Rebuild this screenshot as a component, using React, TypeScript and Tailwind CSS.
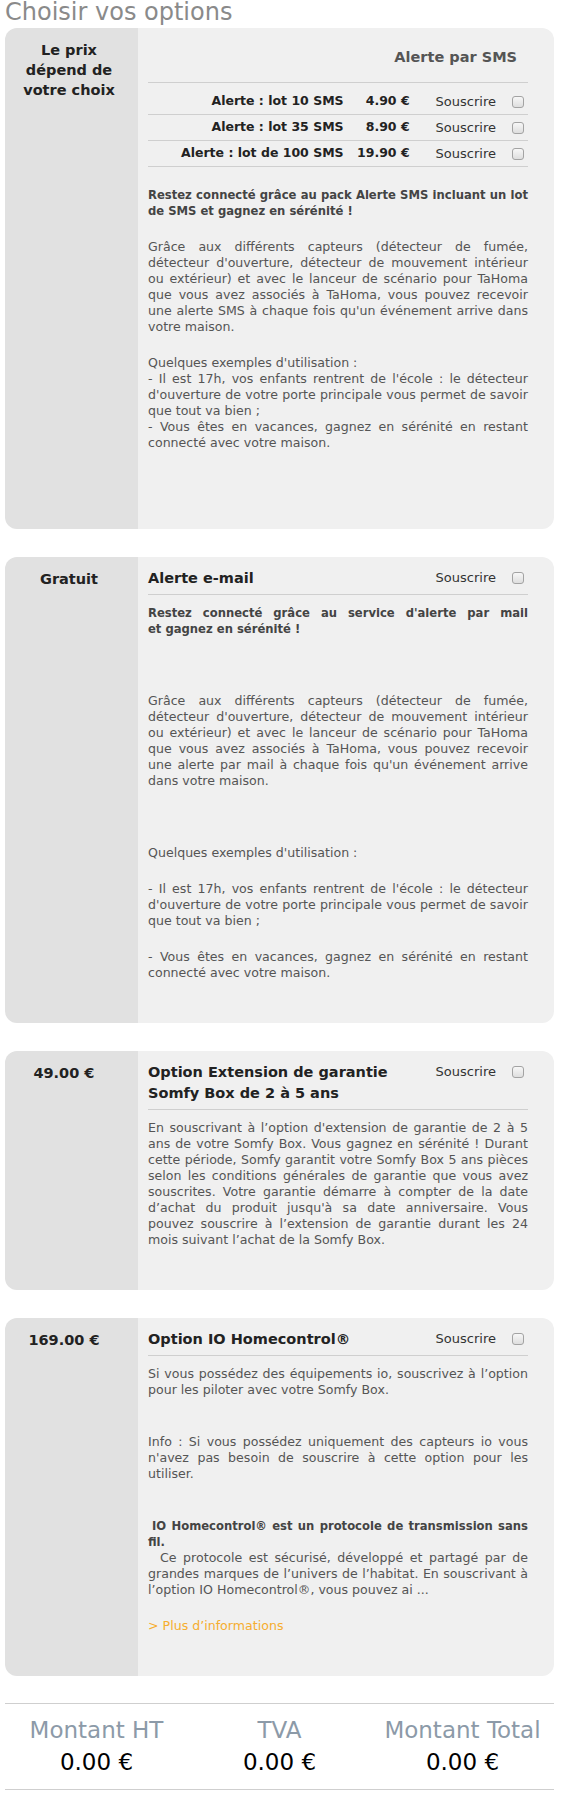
import type { ReactNode } from 'react';

function Box() {
  return (
    <span className="inline-block h-[12px] w-[12px] rounded-[3px] border border-[#a3a3a3] bg-linear-to-b from-[#f7f7f7] to-[#dedede]" />
  );
}

function Subscribe() {
  return (
    <div className="flex shrink-0 items-center gap-[16px] pr-[4px] text-[13px] font-normal leading-4 text-[#333]">
      <span>Souscrire</span>
      <Box />
    </div>
  );
}

function Card({ side, children }: { side: ReactNode; children: ReactNode }) {
  return (
    <section className="mt-[28px] flex overflow-hidden rounded-[12px] first-of-type:mt-0">
      <div className="w-[133px] shrink-0 bg-[#e1e1e1] pt-3 pl-3 pr-[17px] text-center text-[14.5px] font-bold leading-5 text-[#222]">
        {side}
      </div>
      <div className="flex-1 bg-[#f0f0f0] pt-[11px] pl-[10px] pr-[26px] pb-[42px]">{children}</div>
    </section>
  );
}

function Head({ children }: { children: ReactNode }) {
  return (
    <div className="flex items-start justify-between gap-2 border-b border-[#cfcfcf] pb-[5px]">
      <h3 className="text-[14.5px] font-bold leading-[21px] text-[#222]">{children}</h3>
      <div className="pt-[2px]">
        <Subscribe />
      </div>
    </div>
  );
}

const lots = [
  { label: 'Alerte : lot 10 SMS', price: '4.90 €' },
  { label: 'Alerte : lot 35 SMS', price: '8.90 €' },
  { label: 'Alerte : lot de 100 SMS', price: '19.90 €' },
];

const text = 'text-justify text-[12.6px] leading-4 text-[#555]';
const bold = 'text-justify text-[11.6px] font-bold leading-4 text-[#444]';

export default function App() {
  return (
    <main className="ml-[5px] w-[549px] bg-white pb-[6px] font-['DejaVu_Sans',sans-serif]">
      <h1 className="mb-[4px] text-[24px] leading-[24px] text-[#8a8a8a]">Choisir vos options</h1>

      <div>
        <Card side="Le prix dépend de votre choix">
          <div className="border-b border-[#cfcfcf] pt-[8px] pb-[15px] pr-[11px] text-right text-[14.5px] font-bold leading-5 text-[#555]">
            Alerte par SMS
          </div>
          <div className="mt-[6px]">
            {lots.map((lot) => (
              <div key={lot.label} className="flex h-[26px] items-center border-b border-[#cfcfcf] text-[12.5px] font-bold text-[#222]">
                <span className="flex-1 text-right">{lot.label}</span>
                <span className="w-[66px] text-right">{lot.price}</span>
                <div className="ml-[26px]">
                  <Subscribe />
                </div>
              </div>
            ))}
          </div>
          <p className={`mt-5 ${bold}`}>
            Restez connecté grâce au pack Alerte SMS incluant un lot de SMS et gagnez en sérénité !
          </p>
          <p className={`mt-5 ${text}`}>
            Grâce aux différents capteurs (détecteur de fumée, détecteur d'ouverture, détecteur de mouvement intérieur ou
            extérieur) et avec le lanceur de scénario pour TaHoma que vous avez associés à TaHoma, vous pouvez recevoir une
            alerte SMS à chaque fois qu'un événement arrive dans votre maison.
          </p>
          <p className={`mt-5 ${text}`}>
            Quelques exemples d'utilisation :
            <br />- Il est 17h, vos enfants rentrent de l'école : le détecteur d'ouverture de votre porte principale vous
            permet de savoir que tout va bien ;
            <br />- Vous êtes en vacances, gagnez en sérénité en restant connecté avec votre maison.
          </p>
          <p className={`mt-5 ${text}`}>&nbsp;</p>
        </Card>

        <Card side="Gratuit">
          <Head>Alerte e-mail</Head>
          <p className={`mt-[10px] ${bold}`}>
            <span className="block [text-align-last:justify]">Restez connecté grâce au service d'alerte par mail</span>
            et gagnez en sérénité !
          </p>
          <p className={`mt-5 ${text}`}>&nbsp;</p>
          <p className={`mt-5 ${text}`}>
            Grâce aux différents capteurs (détecteur de fumée, détecteur d'ouverture, détecteur de mouvement intérieur ou
            extérieur) et avec le lanceur de scénario pour TaHoma que vous avez associés à TaHoma, vous pouvez recevoir une
            alerte par mail à chaque fois qu'un événement arrive dans votre maison.
          </p>
          <p className={`mt-5 ${text}`}>&nbsp;</p>
          <p className={`mt-5 ${text}`}>Quelques exemples d'utilisation :</p>
          <p className={`mt-5 ${text}`}>
            - Il est 17h, vos enfants rentrent de l'école : le détecteur d'ouverture de votre porte principale vous permet
            de savoir que tout va bien ;
          </p>
          <p className={`mt-5 ${text}`}>- Vous êtes en vacances, gagnez en sérénité en restant connecté avec votre maison.</p>
        </Card>

        <Card side={'49.00 €\u00a0\u00a0'}>
          <Head>Option Extension de garantie Somfy Box de 2 à 5 ans</Head>
          <p className={`mt-[10px] ${text}`}>
            En souscrivant à l’option d'extension de garantie de 2 à 5 ans de votre Somfy Box. Vous gagnez en sérénité !
            Durant cette période, Somfy garantit votre Somfy Box 5 ans pièces selon les conditions générales de garantie
            que vous avez souscrites. Votre garantie démarre à compter de la date d’achat du produit jusqu'à sa date
            anniversaire. Vous pouvez souscrire à l’extension de garantie durant les 24 mois suivant l’achat de la Somfy
            Box.
          </p>
        </Card>

        <Card side={'169.00 €\u00a0\u00a0'}>
          <Head>Option IO Homecontrol®</Head>
          <p className={`mt-[10px] ${text}`}>
            Si vous possédez des équipements io, souscrivez à l’option pour les piloter avec votre Somfy Box.
          </p>
          <p className={`mt-9 ${text}`}>
            Info : Si vous possédez uniquement des capteurs io vous n'avez pas besoin de souscrire à cette option pour les
            utiliser.
          </p>
          <p className={`mt-9 ${text}`}>
            <strong className="text-[11.6px] text-[#444]">
              <span className="inline-block w-[4px]" />
              IO Homecontrol® est un protocole de transmission sans fil.
            </strong>
            <br />
            <span className="inline-block w-[12px]" />
            Ce protocole est sécurisé, développé et partagé par de grandes marques de l’univers de l’habitat. En
            souscrivant à l’option IO Homecontrol®, vous pouvez ai ...
          </p>
          <p className="mt-5 text-[12.6px] leading-4">
            <a href="#" className="text-[#f6ad2f]">
              &gt; Plus d’informations
            </a>
          </p>
        </Card>
      </div>

      <div className="mt-[27px] grid grid-cols-3 border-y border-[#cfcfcf] pt-[10px] pb-[11px] text-center">
        {['Montant HT', 'TVA', 'Montant Total'].map((label) => (
          <div key={label}>
            <div className="text-[23px] leading-8 text-[#8c9aa8]">{label}</div>
            <div className="text-[23px] leading-8 text-black">0.00 €</div>
          </div>
        ))}
      </div>
    </main>
  );
}
